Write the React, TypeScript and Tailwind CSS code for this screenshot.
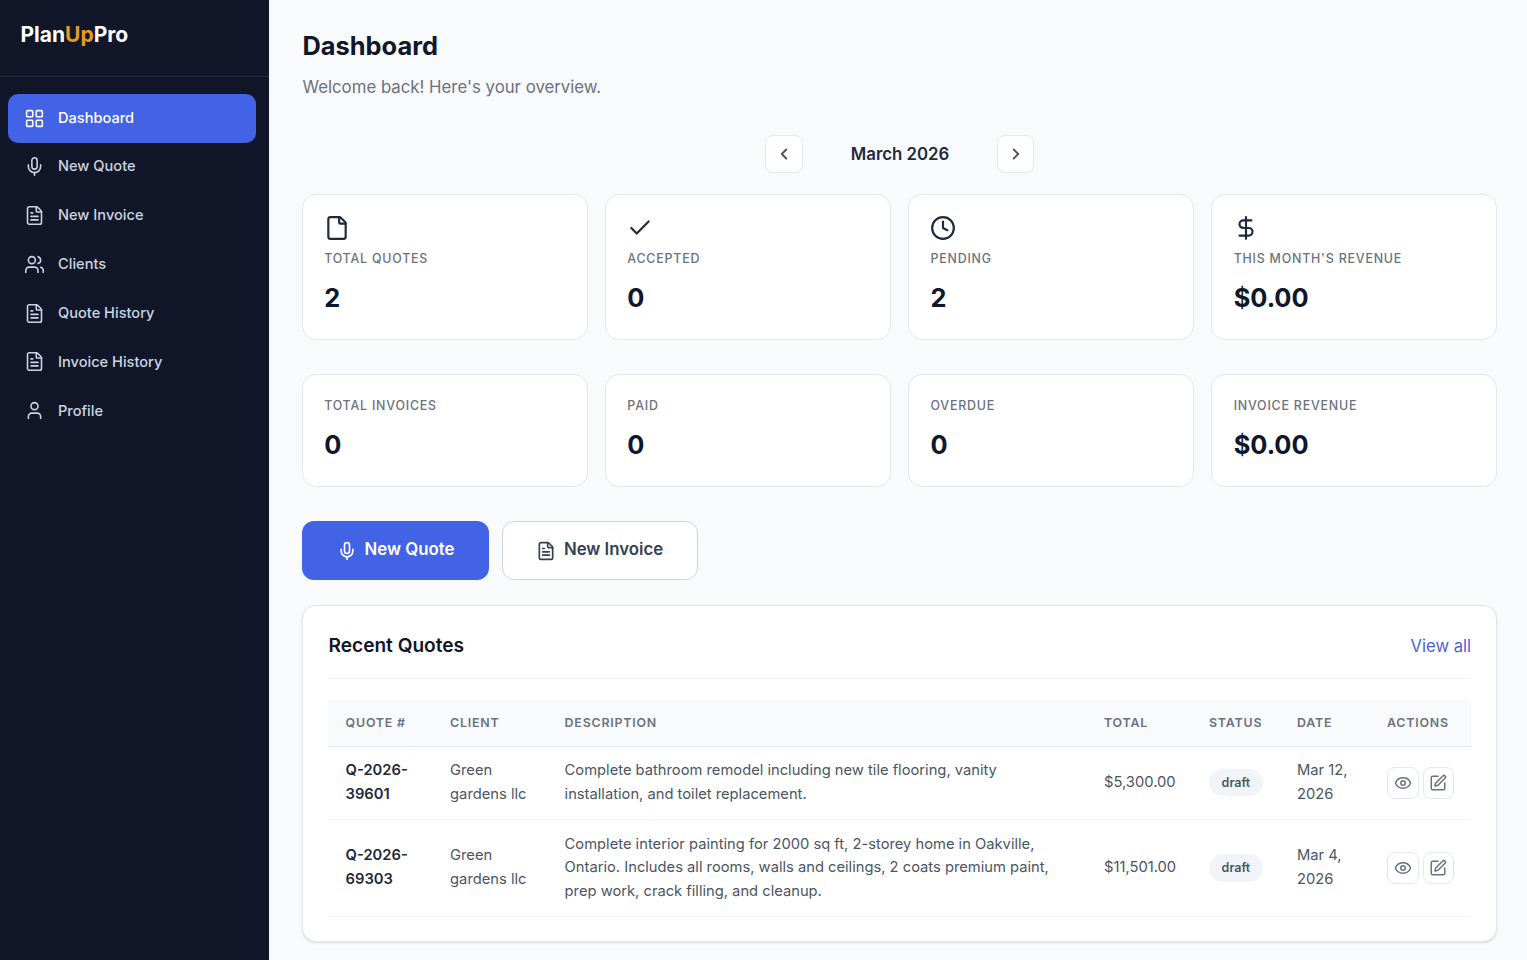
import { Check, ChevronLeft, ChevronRight, Clock, DollarSign, Eye, File, FileText, LayoutGrid, Mic, SquarePen, User, Users } from "lucide-react";
import type { ReactNode } from "react";

const navItems = [
  { label: "Dashboard", icon: LayoutGrid, active: true },
  { label: "New Quote", icon: Mic },
  { label: "New Invoice", icon: FileText },
  { label: "Clients", icon: Users },
  { label: "Quote History", icon: FileText },
  { label: "Invoice History", icon: FileText },
  { label: "Profile", icon: User },
];

const quotes = [
  {
    id: ["Q-2026-", "39601"],
    description: "Complete bathroom remodel including new tile flooring, vanity installation, and toilet replacement.",
    total: "$5,300.00",
    date: ["Mar 12,", "2026"],
  },
  {
    id: ["Q-2026-", "69303"],
    description:
      "Complete interior painting for 2000 sq ft, 2-storey home in Oakville, Ontario. Includes all rooms, walls and ceilings, 2 coats premium paint, prep work, crack filling, and cleanup.",
    total: "$11,501.00",
    date: ["Mar 4,", "2026"],
  },
];

function StatCard({ label, value, icon }: { label: string; value: string; icon?: ReactNode }) {
  return (
    <div className={`rounded-[14px] border border-[#e2e8f0] bg-white pb-[22px] pl-[21.2px] pr-[21px] ${icon ? "pt-[20px]" : "pt-[21px]"}`}>
      {icon && <div className="mb-[8px] ml-[-0.7px] h-[26px] text-[#1e293b]">{icon}</div>}
      <p className="text-[12.4px] font-medium uppercase leading-[20px] tracking-[0.8px] text-[#6b7280]">{label}</p>
      <p className="mt-[10px] text-[25.4px] font-bold leading-[38.4px] text-[#0f172a]">{value}</p>
    </div>
  );
}

export default function App() {
  return (
    <div className="flex h-screen overflow-hidden bg-[#f8fafc] font-['Inter',sans-serif]">
      <aside className="w-[269px] shrink-0 bg-[#111729]">
        <div className="h-[77px] border-b border-[#262c3e] pl-[20.5px] pt-[19.5px] text-[21px] font-bold leading-[29px] text-white">
          Plan<span className="text-[#e89b1f]">Up</span>Pro
        </div>
        <nav className="flex flex-col pl-[8px] pr-[13px] pt-[17px]">
          {navItems.map((item) => (
            <div
              key={item.label}
              className={`flex items-center gap-[13px] rounded-[10px] pl-[16px] text-[14.6px] font-medium ${
                item.active ? "mb-[-0.8px] h-[48.7px] bg-[#4263e5] text-white" : "h-[48.9px] text-[#cbd5e1]"
              }`}
            >
              <item.icon size={21} strokeWidth={1.8} />
              <span className="pt-[2px]">{item.label}</span>
            </div>
          ))}
        </nav>
      </aside>

      <main className="flex-1 pl-[33px] pr-[30px] pt-[28px]">
        <h1 className="pl-[0.5px] text-[25.4px] font-bold leading-[36px] text-[#0f172a]">Dashboard</h1>
        <p className="mt-[10px] pl-[0.5px] text-[16.8px] leading-[26px] text-[#6b7280]">Welcome back! Here's your overview.</p>

        <div className="mt-[35px] flex items-center justify-center">
          <button className="flex h-[38px] w-[38px] items-center justify-center rounded-[8px] border border-[#e2e8f0] bg-white text-[#475569]">
            <ChevronLeft size={18} strokeWidth={2.5} />
          </button>
          <div className="w-[194px] pt-[2px] text-center text-[16.8px] font-semibold text-[#1e293b]">March 2026</div>
          <button className="flex h-[38px] w-[37px] items-center justify-center rounded-[8px] border border-[#e2e8f0] bg-white text-[#475569]">
            <ChevronRight size={18} strokeWidth={2.5} />
          </button>
        </div>

        <div className="mt-[21px] grid grid-cols-4 gap-[17.6px]">
          <StatCard label="Total Quotes" value="2" icon={<File size={26} />} />
          <StatCard label="Accepted" value="0" icon={<Check size={26} />} />
          <StatCard label="Pending" value="2" icon={<Clock size={26} />} />
          <StatCard label="This Month's Revenue" value="$0.00" icon={<DollarSign size={26} />} />
        </div>

        <div className="mt-[33.6px] grid grid-cols-4 gap-[17.6px]">
          <StatCard label="Total Invoices" value="0" />
          <StatCard label="Paid" value="0" />
          <StatCard label="Overdue" value="0" />
          <StatCard label="Invoice Revenue" value="$0.00" />
        </div>

        <div className="mt-[33.6px] flex gap-[13px]">
          <button className="flex h-[59px] w-[187px] items-center justify-center gap-[8px] rounded-[12px] bg-[#4263e5] pb-[1px] text-[16.8px] font-semibold text-white">
            <Mic size={20} className="mt-[1px]" />
            New Quote
          </button>
          <button className="flex h-[59px] w-[196px] items-center justify-center gap-[8px] rounded-[12px] border border-[#cbd5e1] bg-white pb-[1px] pr-[1px] text-[16.8px] font-semibold text-[#334155]">
            <FileText size={20} className="mt-[1px]" />
            New Invoice
          </button>
        </div>

        <section className="mt-[25px] rounded-[14px] border border-[#e2e8f0] bg-white px-[25px] pb-[24px] pt-[24px] shadow-sm">
          <div className="flex items-center justify-between border-b border-[#f1f5f9] pb-[18px]">
            <h2 className="pl-[0.5px] text-[19.1px] font-semibold leading-[30px] text-[#0f172a]">Recent Quotes</h2>
            <a className="pt-[2px] text-[16.6px] text-[#4f5fd8]">View all</a>
          </div>
          <table className="mt-[21px] w-full table-fixed border-collapse text-[14.72px] leading-[23.55px] text-[#4b5563]">
            <colgroup>
              <col className="w-[104.5px]" />
              <col className="w-[114.5px]" />
              <col />
              <col className="w-[105px]" />
              <col className="w-[88px]" />
              <col className="w-[90px]" />
              <col className="w-[84px]" />
            </colgroup>
            <thead>
              <tr className="h-[46px] border-b border-[#e2e8f0] bg-[#f8fafc] text-left text-[12.4px] font-semibold uppercase tracking-[0.8px] text-[#6b7280]">
                <th className="pl-[17.6px] font-semibold">Quote #</th>
                <th className="pl-[17.6px] font-semibold">Client</th>
                <th className="pl-[17.6px] font-semibold">Description</th>
                <th className="font-semibold">Total</th>
                <th className="font-semibold">Status</th>
                <th className="font-semibold">Date</th>
                <th className="font-semibold">Actions</th>
              </tr>
            </thead>
            <tbody>
              {quotes.map((q) => (
                <tr key={q.total} className="border-b border-[#f1f5f9]">
                  <td className="pb-[13px] pl-[17.6px] pt-[12.5px] font-semibold text-[#1e293b]">
                    {q.id[0]}
                    <br />
                    {q.id[1]}
                  </td>
                  <td className="pb-[13px] pl-[17.6px] pt-[12.5px]">
                    Green
                    <br />
                    gardens llc
                  </td>
                  <td className="pb-[13px] pl-[17.6px] pr-[35px] pt-[12.5px]">{q.description}</td>
                  <td className="pb-[13px] pt-[12.5px]">{q.total}</td>
                  <td className="pb-[13px] pt-[12.5px]">
                    <span className="inline-block rounded-full bg-[#f1f5f9] px-[12.6px] py-[2px] text-[12.5px] font-semibold text-[#4b5563]">
                      draft
                    </span>
                  </td>
                  <td className="pb-[13px] pt-[12.5px]">
                    {q.date[0]}
                    <br />
                    {q.date[1]}
                  </td>
                  <td className="pb-[13px] pt-[12.5px]">
                    <div className="flex gap-[4px]">
                      <button className="flex h-[32px] w-[32px] items-center justify-center rounded-[8px] border border-[#e2e8f0] bg-white pr-[1px] text-[#6b7280]">
                        <Eye size={18} />
                      </button>
                      <button className="flex h-[32px] w-[31px] items-center justify-center rounded-[8px] border border-[#e2e8f0] bg-white pr-[1px] text-[#6b7280]">
                        <SquarePen size={18} />
                      </button>
                    </div>
                  </td>
                </tr>
              ))}
            </tbody>
          </table>
        </section>
      </main>
    </div>
  );
}
